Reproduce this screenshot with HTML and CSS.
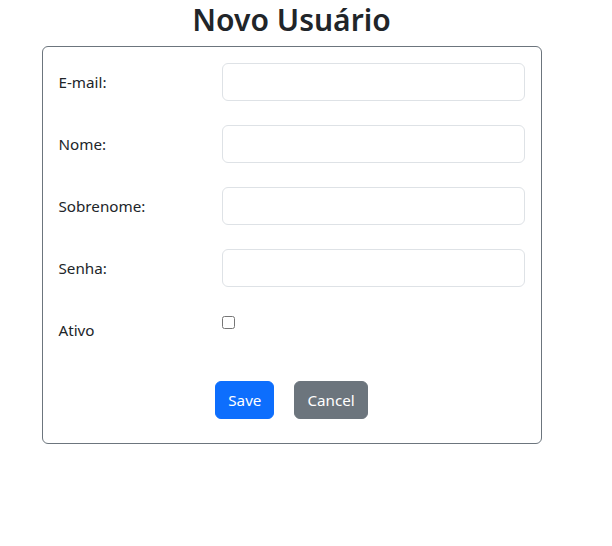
FILE: index.html
```html
<!DOCTYPE html>
<html lang="pt">
<head>
<meta charset="utf-8">
<title>Novo Usuário</title>
<link rel="stylesheet" href="styles.css">
</head>
<body>
<div class="page">
  <h1 class="title">Novo Usuário</h1>
  <form class="card">
    <div class="row">
      <label class="label" for="email">E-mail:</label>
      <div class="field"><input class="input" id="email" type="text"></div>
    </div>
    <div class="row">
      <label class="label" for="nome">Nome:</label>
      <div class="field"><input class="input" id="nome" type="text"></div>
    </div>
    <div class="row">
      <label class="label" for="sobrenome">Sobrenome:</label>
      <div class="field"><input class="input" id="sobrenome" type="text"></div>
    </div>
    <div class="row">
      <label class="label" for="senha">Senha:</label>
      <div class="field"><input class="input" id="senha" type="password"></div>
    </div>
    <div class="row">
      <label class="label" for="ativo">Ativo</label>
      <div class="field"><input class="check" id="ativo" type="checkbox"></div>
    </div>
    <div class="actions">
      <button type="button" class="btn btn-primary">Save</button>
      <button type="button" class="btn btn-secondary">Cancel</button>
    </div>
  </form>
</div>
</body>
</html>
```
FILE: styles.css
```css
html, body {
  margin: 0;
  padding: 0;
  background: #fff;
}
body {
  font-family: "Noto Sans", "Open Sans", sans-serif;
  font-size: 15.2px;
  line-height: 1.5;
  color: #212529;
}
.page {
  width: 583px;
  padding-top: 1px;
}
.title {
  margin: 0 0 8px;
  text-align: center;
  font-size: 30px;
  line-height: 37.4px;
  font-weight: 600;
}
.card {
  width: 500px;
  box-sizing: border-box;
  margin: 0 auto;
  border: 1px solid #6c757d;
  border-radius: 6px;
  padding: 16px 16px 24px;
}
.row {
  display: grid;
  grid-template-columns: 163.3px 1fr;
  margin: 0 -12px 24px;
}
.label {
  padding: 7px 12px;
  line-height: 24px;
}
.field {
  padding: 0 12px;
}
.input {
  display: block;
  box-sizing: border-box;
  width: 100%;
  height: 38px;
  border: 1px solid #dee2e6;
  border-radius: 6px;
  font: inherit;
  padding: 6px 12px;
}
.check {
  margin: 5px 0 0;
  width: 13px;
  height: 13px;
}
.actions {
  display: flex;
  justify-content: center;
  gap: 20px;
  margin-top: 32px;
}
.btn {
  font: inherit;
  line-height: 24px;
  padding: 6px 12px;
  border: 1px solid transparent;
  border-radius: 6px;
  color: #fff;
}
.btn-primary {
  background: #0d6efd;
  border-color: #0d6efd;
}
.btn-secondary {
  background: #6c757d;
  border-color: #6c757d;
}
```
